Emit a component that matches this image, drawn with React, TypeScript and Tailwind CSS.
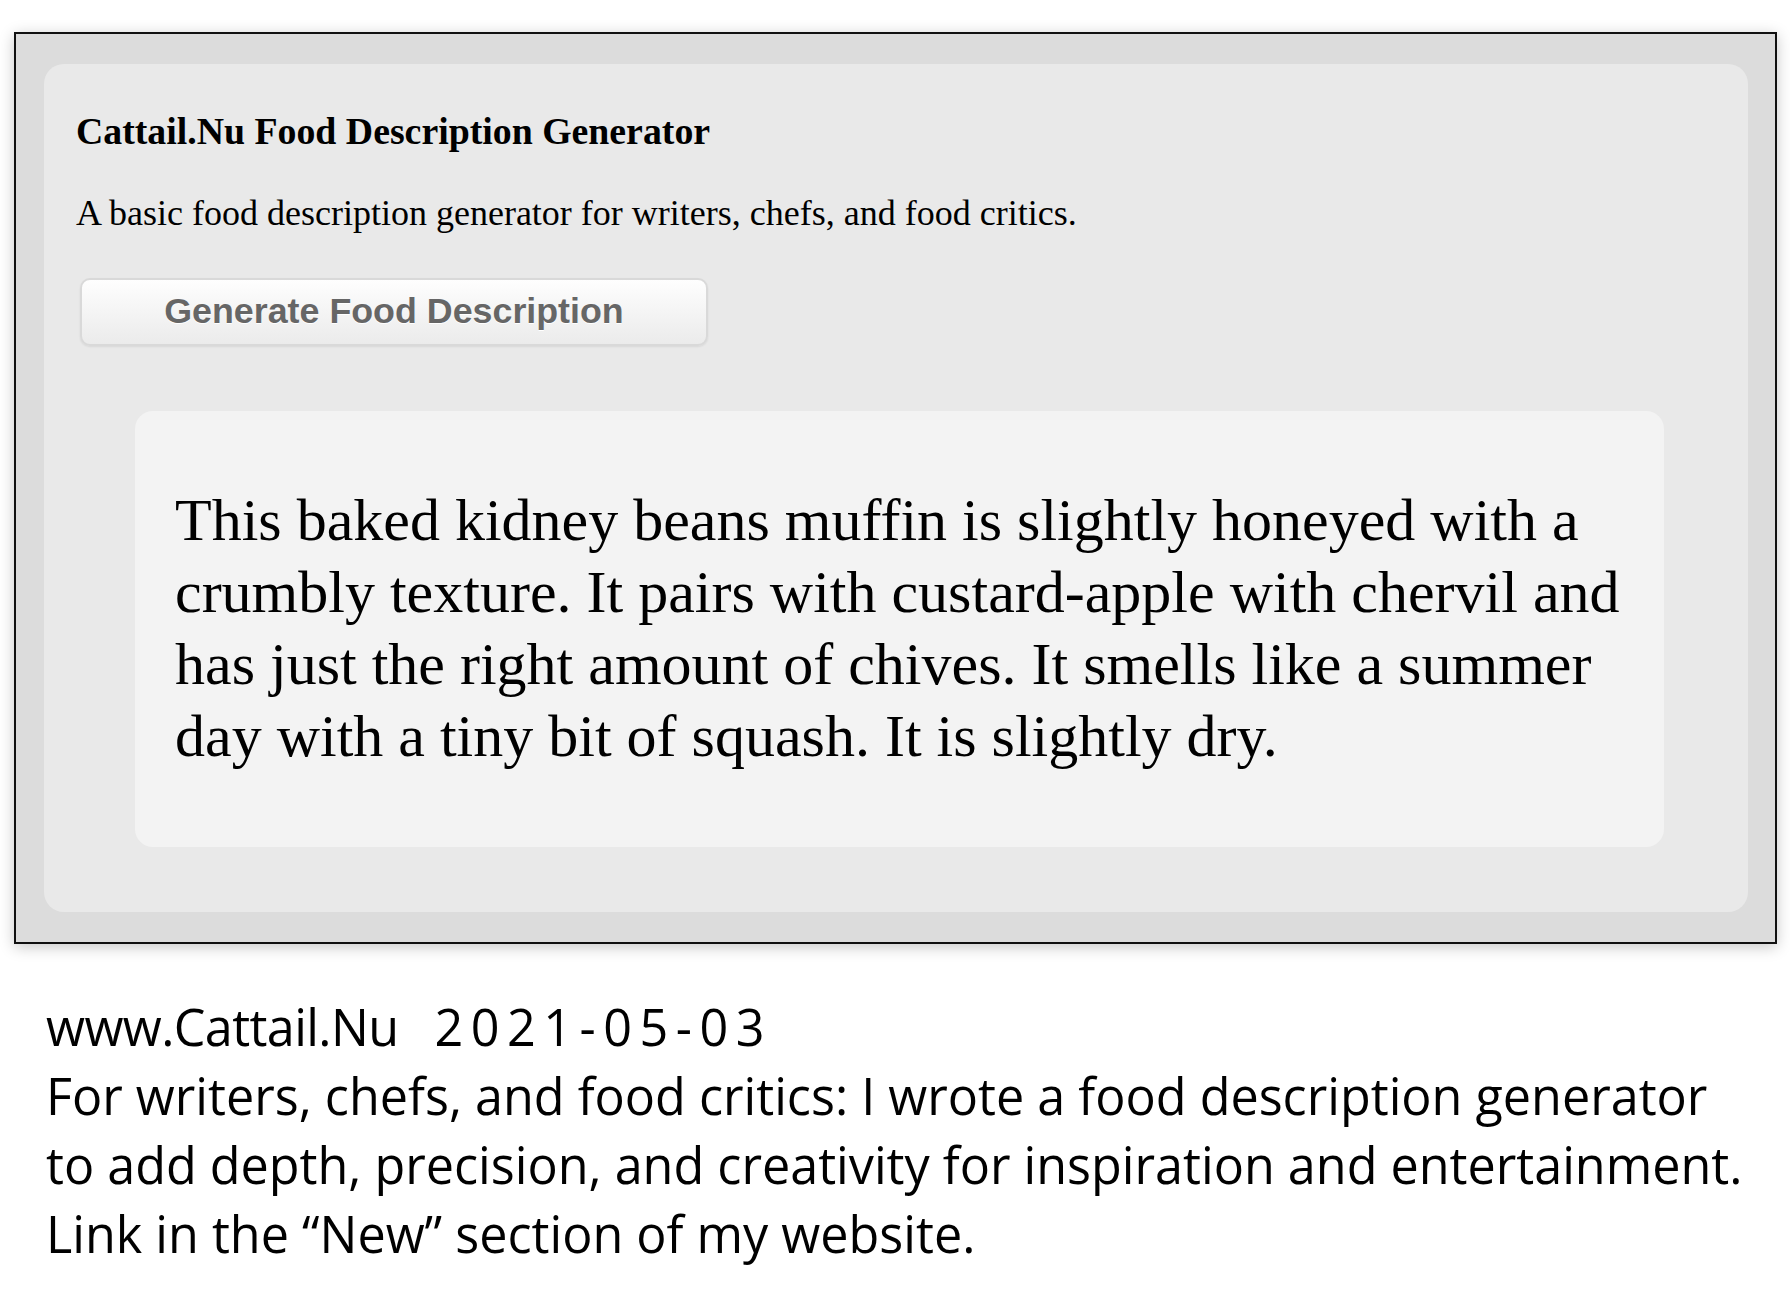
import React from "react";

const descriptionLines = [
  "This baked kidney beans muffin is slightly honeyed with a",
  "crumbly texture. It pairs with custard-apple with chervil and",
  "has just the right amount of chives. It smells like a summer",
  "day with a tiny bit of squash. It is slightly dry.",
];

const footerLines = [
  "For writers, chefs, and food critics: I wrote a food description generator",
  "to add depth, precision, and creativity for inspiration and entertainment.",
  "Link in the \u201CNew\u201D section of my website.",
];

function GeneratorPanel() {
  return (
    <div className="rounded-[20px] bg-[#e9e9e9] pt-[46px] pb-[65px] pl-[32px] font-['Liberation_Serif','Times_New_Roman',serif] text-black">
      <h1 className="text-[37.8px] font-bold leading-[43px]">
        Cattail.Nu Food Description Generator
      </h1>
      <p className="mt-[40px] text-[36px] leading-[41px]">
        A basic food description generator for writers, chefs, and food critics.
      </p>
      <button
        type="button"
        className="mt-[44px] ml-[4px] flex h-[68px] w-[628px] items-center justify-center rounded-[10px] border-2 border-[#d9d9d9] bg-gradient-to-b from-[#fefefe] to-[#ebebeb] font-['Liberation_Sans',Arial,sans-serif] text-[35.8px] font-bold text-[#666666] shadow-[0_1px_2px_rgba(0,0,0,0.08)] [text-shadow:0_1px_0_#ffffff]"
      >
        Generate Food Description
      </button>
      <div className="mt-[65px] ml-[59px] w-[1529px] rounded-[18px] bg-[#f3f3f3] pt-[73px] pb-[75px] pl-[40px]">
        <p className="text-[60px] leading-[72px]">
          {descriptionLines.map((line) => (
            <span key={line} className="block whitespace-nowrap">
              {line}
            </span>
          ))}
        </p>
      </div>
    </div>
  );
}

export default function App() {
  return (
    <div className="min-h-screen bg-white pt-[32px] pb-[20px]">
      <div className="ml-[14px] mr-[13px] border-2 border-[#111111] bg-[#dcdcdc] pt-[30px] pb-[30px] pl-[28px] pr-[27px] shadow-[0_3px_14px_rgba(0,0,0,0.22)]">
        <GeneratorPanel />
      </div>

      <footer className="mt-[48px] pl-[46px] font-['Open_Sans','Noto_Sans',sans-serif] text-[50.3px] leading-[69px] text-black">
        <div className="whitespace-nowrap">
          <span className="tracking-[-0.6px]">www.Cattail.Nu</span>
          <span className="ml-[36px] tracking-[7.5px]">2021-05-03</span>
        </div>
        {footerLines.map((line) => (
          <div key={line} className="whitespace-nowrap">
            {line}
          </div>
        ))}
      </footer>
    </div>
  );
}
